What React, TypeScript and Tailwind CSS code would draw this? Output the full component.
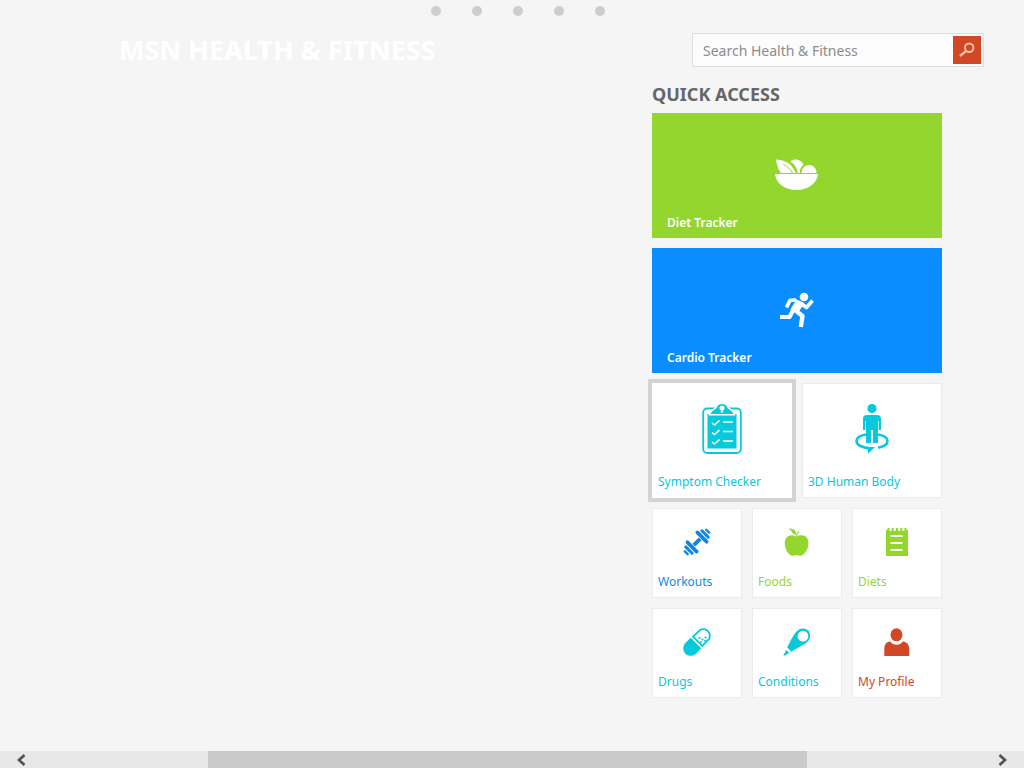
import type { ReactNode } from "react";

type Tile = { label: string; color: string; icon: ReactNode };

const SaladIcon = () => (
  <svg width="44" height="32" viewBox="0 0 44 32" fill="currentColor" aria-hidden="true">
    <path d="M0 15h43c-1 9.500-10 16-21.500 16S1 24.500 0 15z" />
    <path d="M1 .5c6 .5 11.500 2 15 6 2 2.300 3.500 4.500 5 7.500H6C3.500 11 1.800 6 1 .5z" />
    <path d="M15.500 2.500C17.500.8 20 .3 22.500.8c3 .6 5 2.700 6 5-2.200 1.500-3.500 4-3.800 8.200h-2C22 9 20 5.500 15.500 2.500z" />
    <path d="M26.500 14c0-5 3.500-8 7.500-8s7.500 3 7.500 8z" />
    <path d="M8.500 5.500c4 2 7 5 9 8.500" fill="none" stroke="#92d62e" strokeWidth="1" />
  </svg>
);

const RunnerIcon = () => (
  <svg width="36" height="36" viewBox="0 0 36 36" fill="none" stroke="currentColor" aria-hidden="true">
    <circle cx="25" cy="5" r="4.300" fill="currentColor" stroke="none" />
    <path d="M15 7.500 24 11.500 18.500 20 12.500 17.500 17 10z" fill="currentColor" strokeWidth="2" strokeLinejoin="round" />
    <path d="M7.500 15.500 11 8.200H17" strokeWidth="3.600" strokeLinejoin="round" />
    <path d="M22 11.500 27.500 15.500 33.500 8.500" strokeWidth="3.600" strokeLinejoin="round" />
    <path d="M14.500 17.500 10.500 25H1" strokeWidth="4.200" strokeLinejoin="round" />
    <path d="M16.500 18.500 23.500 24 21.800 35" strokeWidth="4.400" strokeLinejoin="round" />
  </svg>
);

const ClipboardIcon = () => (
  <svg width="40" height="52" viewBox="0 0 40 52" aria-hidden="true">
    <rect x="1.200" y="5.500" width="37.600" height="44.500" rx="4" fill="none" stroke="currentColor" strokeWidth="1.800" />
    <path d="M5.500 11h29v34.500h-29z" fill="currentColor" />
    <path d="M7.500 11.800C8.500 6 13 7 14.500 3.500 15.300 1 17 .3 20 .3s4.700.7 5.500 3.200C27 7 31.500 6 32.500 11.800z" fill="currentColor" stroke="white" strokeWidth="1.600" />
    <circle cx="20" cy="5" r="2.500" fill="white" />
    <path d="m20 5.500 1.500 4h-3z" fill="white" />
    <g fill="none" stroke="white" strokeWidth="1.600">
      <path d="m10 20 2.500 2 5-4.500M10 29.500l2.500 2 5-4.500M10 39l2.500 2 5-4.500M21 19h10M21 28.500h10M21 38h10" />
    </g>
  </svg>
);

const BodyIcon = () => (
  <svg width="36" height="52" viewBox="0 0 36 52" fill="currentColor" aria-hidden="true">
    <path d="M12 31.500C6 32.500 2.500 35 2.500 38c0 4 6 7 14 7.200M24 31.500c6 1 9.500 3.500 9.500 6.500 0 3.500-4 5.800-9.500 6.800" fill="none" stroke="currentColor" strokeWidth="2.600" />
    <path d="M13 44h8l-6.500 6.500z" />
    <circle cx="18" cy="5.500" r="4.600" />
    <path d="M13 12h10c2.700 0 4 1.500 4 3.800V27h-2.300v-9H24v22h-5V27h-2v13h-5V18h-.7v9H9V15.800C9 13.500 10.300 12 13 12z" />
  </svg>
);

const DumbbellIcon = () => (
  <svg width="28" height="28" viewBox="0 0 28 28" fill="none" stroke="currentColor" aria-hidden="true">
    <g transform="rotate(-45 14 14)" strokeLinecap="round">
      <path d="M9.500 14h9" strokeWidth="4" strokeLinecap="butt" />
      <path d="M7 7.500v13M21 7.500v13" strokeWidth="3.800" />
      <path d="M2.600 9.500v9M25.400 9.500v9" strokeWidth="3" />
      <path d="M-1.200 12v4M29.200 12v4" strokeWidth="2.400" />
    </g>
  </svg>
);

const AppleIcon = () => (
  <svg width="26" height="28" viewBox="0 0 26 28" fill="currentColor" aria-hidden="true">
    <path d="M12.500 8.500C8.500 6.500 4.500 7 2.300 10-.7 14.500 1 22 5 26c2.300 2.300 4.500 2 7.500 1 3 1 5.200 1.300 7.500-1 4-4 6-11.500 3-16-2-3-6.500-3.500-10.500-1.500z" />
    <path d="M4.500.5c3-.3 6 .6 7.200 3 .5 1 .6 2.500.7 3.500-3-.3-3.700-1.800-4.700-3.200-.9-1.500-2-2.300-3.200-3.300z" />
    <path d="M12.800 8c0-2 .8-3.300 2.300-4.500" fill="none" stroke="currentColor" strokeWidth="1.200" />
  </svg>
);

const NotepadIcon = () => (
  <svg width="22" height="28" viewBox="0 0 22 28" aria-hidden="true">
    <path d="M0 2h22v26H0z" fill="currentColor" />
    <path d="M2.500 0v3M6.700 0v3M11 0v3M15.300 0v3M19.500 0v3" stroke="currentColor" strokeWidth="2" />
    <path d="M4.600 1.500v1.500M8.800 1.500v1.500M13.200 1.500v1.500M17.400 1.500v1.500M4.500 8h12M4.500 15h12M4.500 22h12" stroke="white" strokeWidth="1.800" />
  </svg>
);

const PillIcon = () => (
  <svg width="28" height="28" viewBox="0 0 28 28" fill="none" stroke="currentColor" aria-hidden="true">
    <g transform="rotate(-45 14 14)">
      <path d="M12.500 6.500H5a7.500 7.500 0 0 0 0 15h7.500z" fill="currentColor" stroke="none" />
      <path d="M15 7.500h8a6.500 6.500 0 0 1 0 13h-8z" strokeWidth="1.800" />
    </g>
    <g fill="currentColor" stroke="none">
      <circle cx="16.500" cy="10" r="1.100" />
      <circle cx="19.500" cy="11.500" r="1.100" />
      <circle cx="22.500" cy="9.500" r="1.100" />
      <circle cx="18" cy="14" r="1" />
      <circle cx="22" cy="12.800" r="1" />
    </g>
  </svg>
);

const ThermometerIcon = () => (
  <svg width="28" height="28" viewBox="0 0 28 28" fill="currentColor" aria-hidden="true">
    <path fillRule="evenodd" d="M14 3C17.500-.3 22.500-.2 25.200 2.600s2.600 8.200-.7 11.200C21 17 14 20 8.500 23.700l-4.300-4.200C7.300 13.500 10.500 6.500 14 3zM20 2.800a5.400 5.400 0 1 0 0 10.800 5.400 5.400 0 0 0 0-10.800z" />
    <path d="m3.300 22 2.900 2.800L2 27.500H.3z" />
  </svg>
);

const PersonIcon = () => (
  <svg width="26" height="28" viewBox="0 0 26 28" fill="currentColor" aria-hidden="true">
    <ellipse cx="12.500" cy="6.800" rx="6" ry="6.500" />
    <path d="M6 13.200c1.500 2.500 4 3.500 6.500 3.500s5-1 6.500-3.500c4 .8 6.300 3.500 6.300 8V28H.3v-6.800c0-4.500 1.700-7.200 5.700-8z" />
  </svg>
);

const SearchIcon = () => (
  <svg width="16" height="16" viewBox="0 0 16 16" fill="none" stroke="#ffc4a4" aria-hidden="true">
    <circle cx="10.200" cy="5.700" r="4.200" strokeWidth="2" />
    <path d="M7.200 8.800 1 14" strokeWidth="2.400" />
  </svg>
);

const wideTiles = [
  { label: "Diet Tracker", bg: "bg-[#92d62e]", icon: <SaladIcon /> },
  { label: "Cardio Tracker", bg: "bg-[#0a8eff]", icon: <RunnerIcon /> },
];

const mediumTiles: (Tile & { selected: boolean })[] = [
  { label: "Symptom Checker", color: "text-[#08c8dc]", icon: <ClipboardIcon />, selected: true },
  { label: "3D Human Body", color: "text-[#08c8dc]", icon: <BodyIcon />, selected: false },
];

const smallTiles: Tile[] = [
  { label: "Workouts", color: "text-[#1087e8]", icon: <DumbbellIcon /> },
  { label: "Foods", color: "text-[#92d62e]", icon: <AppleIcon /> },
  { label: "Diets", color: "text-[#92d62e]", icon: <NotepadIcon /> },
  { label: "Drugs", color: "text-[#08c8dc]", icon: <PillIcon /> },
  { label: "Conditions", color: "text-[#08c8dc]", icon: <ThermometerIcon /> },
  { label: "My Profile", color: "text-[#d24726]", icon: <PersonIcon /> },
];

export default function App() {
  return (
    <div className="flex min-h-screen flex-col bg-[#f5f5f5] font-['Noto_Sans','Open_Sans',sans-serif]">
      <div className="flex justify-center gap-[31px] pt-1.5 pl-3" role="status" aria-label="Loading">
        {[0, 1, 2, 3, 4].map((dot) => (
          <span key={dot} className="size-2.5 rounded-full bg-[#cdcdcd]" />
        ))}
      </div>

      <header className="mt-[17px] flex items-center justify-between pr-10 pl-[119px]">
        <h1 className="text-[27px] leading-8 font-bold text-white">MSN HEALTH &amp; FITNESS</h1>
        <form
          className="flex w-[292px] items-center border border-[#dddddd] bg-[#fcfcfc] p-0.5"
          onSubmit={(event) => event.preventDefault()}
        >
          <input
            type="search"
            aria-label="Search Health & Fitness"
            placeholder="Search Health & Fitness"
            className="h-7 min-w-0 flex-1 bg-transparent px-2 text-sm text-[#666] outline-none placeholder:text-[#8c8c8c]"
          />
          <button type="submit" aria-label="Search" className="flex size-7 items-center justify-center bg-[#d24726]">
            <SearchIcon />
          </button>
        </form>
      </header>

      <main className="flex flex-1 justify-end pt-[15px] pr-[82px] pb-8">
        <section className="w-[290px]" aria-labelledby="quick-access">
          <h2 id="quick-access" className="mb-[7px] text-lg leading-6 font-bold text-[#666]">
            QUICK ACCESS
          </h2>
          <div className="grid gap-2.5">
            {wideTiles.map((tile) => (
              <button
                key={tile.label}
                type="button"
                className={`flex h-[125px] flex-col px-[15px] pb-1.5 text-left text-xs font-semibold text-white ${tile.bg}`}
              >
                <span className="flex w-full flex-1 items-center justify-center pt-[22px]">{tile.icon}</span>
                <span className="leading-[18px]">{tile.label}</span>
              </button>
            ))}
            <div className="grid grid-cols-2 gap-2.5">
              {mediumTiles.map((tile) => (
                <button
                  key={tile.label}
                  type="button"
                  className={`flex h-[115px] flex-col border bg-white px-[5px] pb-1.5 text-left text-xs ${tile.color} ${
                    tile.selected ? "border-white ring-4 ring-[#d3d3d5]" : "border-[#ebebeb]"
                  }`}
                >
                  <span className="flex w-full flex-1 items-center justify-center">{tile.icon}</span>
                  <span className="leading-[18px]">{tile.label}</span>
                </button>
              ))}
            </div>
            <div className="grid grid-cols-3 gap-2.5">
              {smallTiles.map((tile) => (
                <button
                  key={tile.label}
                  type="button"
                  className={`flex h-[90px] flex-col border border-[#ebebeb] bg-white px-[5px] pb-1.5 text-left text-xs ${tile.color}`}
                >
                  <span className="flex w-full flex-1 items-center justify-center pt-0.5">{tile.icon}</span>
                  <span className="leading-[18px]">{tile.label}</span>
                </button>
              ))}
            </div>
          </div>
        </section>
      </main>

      <div className="flex h-[17px] items-center bg-[#e8e8e8] text-[#505050]">
        <button type="button" aria-label="Scroll left" className="flex h-full w-[42px] items-center justify-center">
          <svg width="10" height="12" viewBox="0 0 10 12" fill="none" stroke="currentColor" strokeWidth="2.600" aria-hidden="true">
            <path d="M8.500 1 3 6l5.500 5" />
          </svg>
        </button>
        <div className="flex h-full flex-1">
          <div className="ml-[17.700%] h-full w-[63.700%] bg-[#cacaca]" />
        </div>
        <button type="button" aria-label="Scroll right" className="flex h-full w-[42px] items-center justify-center">
          <svg width="10" height="12" viewBox="0 0 10 12" fill="none" stroke="currentColor" strokeWidth="2.600" aria-hidden="true">
            <path d="M1.500 1 7 6l-5.500 5" />
          </svg>
        </button>
      </div>
    </div>
  );
}
